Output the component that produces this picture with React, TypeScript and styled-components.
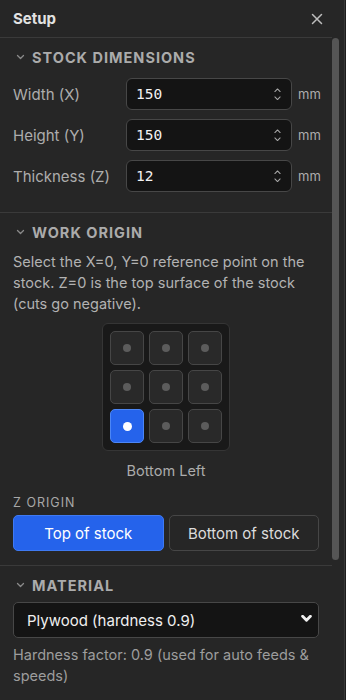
import React, { useState } from 'react';
import styled, { createGlobalStyle } from 'styled-components';

const GlobalStyle = createGlobalStyle`
  html, body {
    margin: 0;
    padding: 0;
    background: #1d1d1d;
  }
  body {
    font-family: Inter, "Liberation Sans", Arial, sans-serif;
    -webkit-font-smoothing: antialiased;
  }
  * { box-sizing: border-box; }
`;

const Shell = styled.div`
  display: flex;
  width: 346px;
  height: 700px;
  background: #1d1d1d;
`;

const Panel = styled.div`
  width: 345px;
  height: 700px;
  display: flex;
  flex-direction: column;
  background: #262626;
  border-right: 1px solid #383838;
`;

const Header = styled.div`
  height: 38px;
  flex: none;
  margin-right: 12px;
  padding: 0 5px 0 13px;
  display: flex;
  align-items: center;
  justify-content: space-between;
  border-bottom: 1px solid #3a3a3a;
`;

const Title = styled.h1`
  margin: 0;
  font-size: 15px;
  font-weight: 700;
  color: #e2e2e2;
`;

const CloseButton = styled.button`
  width: 20px;
  height: 20px;
  padding: 0;
  border: 0;
  background: transparent;
  display: flex;
  align-items: center;
  justify-content: center;
  color: #bdbdbd;
  cursor: pointer;
`;

const Body = styled.div`
  flex: 1;
  min-height: 0;
  display: flex;
`;

const Content = styled.div`
  flex: 1;
  min-width: 0;
  overflow: hidden;
`;

const ScrollRail = styled.div`
  width: 12px;
  flex: none;
  padding-right: 5px;
`;

const ScrollThumb = styled.div`
  height: 522px;
  background: #555555;
  border-radius: 4px;
`;

const Section = styled.section<{ $pb: number; $last?: boolean }>`
  padding: 9px 13px ${(p) => p.$pb}px;
  border-bottom: ${(p) => (p.$last ? '0' : '1px solid #3a3a3a')};
`;

const SectionTitle = styled.div<{ $mb: number }>`
  height: 20px;
  display: flex;
  align-items: center;
  gap: 7px;
  margin-bottom: ${(p) => p.$mb}px;
  padding-left: 3px;
  font-size: 14.5px;
  font-weight: 700;
  letter-spacing: 1px;
  color: #ababab;
  text-transform: uppercase;
`;

const Rows = styled.div`
  display: flex;
  flex-direction: column;
  gap: 9px;
`;

const FieldRow = styled.div`
  display: flex;
  align-items: center;
  height: 32px;
`;

const FieldLabel = styled.label`
  flex: none;
  width: 113px;
  font-size: 15px;
  color: #adadad;
`;

const NumberBox = styled.div`
  flex: none;
  width: 166px;
  height: 32px;
  display: flex;
  align-items: center;
  background: #141414;
  border: 1px solid #474747;
  border-radius: 6px;
  padding: 0 10px 0 9px;
`;

const NumberInput = styled.input`
  flex: 1;
  min-width: 0;
  border: 0;
  outline: none;
  background: transparent;
  color: #f2f2f2;
  font-family: "DejaVu Sans Mono", "Liberation Mono", monospace;
  font-size: 14.5px;
  padding: 0;
  &::-webkit-inner-spin-button,
  &::-webkit-outer-spin-button {
    -webkit-appearance: none;
    margin: 0;
  }
`;

const Stepper = styled.div`
  display: flex;
  flex-direction: column;
  gap: 4px;
  color: #a8a8a8;
`;

const Unit = styled.span`
  margin-left: 6px;
  font-size: 13px;
  color: #adadad;
`;

const Description = styled.p`
  margin: 0 0 9px;
  font-size: 14.5px;
  line-height: 21px;
  color: #b2b2b2;
`;

const GridWrap = styled.div`
  display: flex;
  flex-direction: column;
  align-items: center;
`;

const OriginGrid = styled.div`
  display: grid;
  grid-template-columns: repeat(3, 34px);
  grid-auto-rows: 34px;
  gap: 5px;
  padding: 7px;
  background: #191919;
  border: 1px solid #353535;
  border-radius: 6px;
`;

const Cell = styled.button<{ $active: boolean }>`
  padding: 0;
  display: flex;
  align-items: center;
  justify-content: center;
  border-radius: 5px;
  border: 1px solid ${(p) => (p.$active ? '#4c86f5' : '#464646')};
  background: ${(p) => (p.$active ? '#2563eb' : '#292929')};
  cursor: pointer;
`;

const Dot = styled.span<{ $active: boolean }>`
  width: ${(p) => (p.$active ? 9 : 8)}px;
  height: ${(p) => (p.$active ? 9 : 8)}px;
  border-radius: 50%;
  background: ${(p) => (p.$active ? '#ffffff' : '#5c5c5c')};
`;

const GridCaption = styled.div`
  margin-top: 10px;
  font-size: 14.5px;
  line-height: 20px;
  color: #acacac;
`;

const SubLabel = styled.div`
  margin-top: 14px;
  margin-bottom: 4px;
  font-size: 12.5px;
  line-height: 16px;
  letter-spacing: 1px;
  color: #a8a8a8;
`;

const Toggle = styled.div`
  display: grid;
  grid-template-columns: 1fr 1fr;
  gap: 5px;
`;

const ToggleButton = styled.button<{ $active: boolean }>`
  height: 36px;
  border-radius: 5px;
  font-family: inherit;
  font-size: 15px;
  cursor: pointer;
  border: 1px solid ${(p) => (p.$active ? '#3f7af2' : '#464646')};
  background: ${(p) => (p.$active ? '#2563eb' : 'transparent')};
  color: ${(p) => (p.$active ? '#ffffff' : '#dcdcdc')};
`;

const SelectWrap = styled.div`
  position: relative;
  height: 36px;
`;

const Select = styled.select`
  width: 100%;
  height: 36px;
  appearance: none;
  -webkit-appearance: none;
  background: #141414;
  border: 1px solid #474747;
  border-radius: 5px;
  padding: 0 30px 0 13px;
  color: #f0f0f0;
  font-family: inherit;
  font-size: 15px;
  outline: none;
`;

const SelectChevron = styled.span`
  position: absolute;
  right: 7px;
  top: 13px;
  pointer-events: none;
  color: #f0f0f0;
  display: flex;
`;

const Help = styled.p`
  margin: 6px 0 0;
  font-size: 14.5px;
  line-height: 21px;
  color: #9d9d9d;
`;

const Chevron = ({ size = 8, up = false, sw = 1.4 }: { size?: number; up?: boolean; sw?: number }) => (
  <svg width={size} height={size / 2 + 1} viewBox="0 0 8 5" fill="none" stroke="currentColor" strokeWidth={sw} strokeLinecap="round" strokeLinejoin="round">
    {up ? <path d="M1 4 L4 1 L7 4" /> : <path d="M1 1 L4 4 L7 1" />}
  </svg>
);

const SectionChevron = () => (
  <svg width="9" height="6" viewBox="0 0 9 6" fill="none" stroke="#8a8a8a" strokeWidth="1.3" strokeLinecap="round" strokeLinejoin="round">
    <path d="M1.5 1.5 L4.5 4.5 L7.5 1.5" />
  </svg>
);

const fields = [
  { label: 'Width (X)', value: 150 },
  { label: 'Height (Y)', value: 150 },
  { label: 'Thickness (Z)', value: 12 },
];

const origins = [
  'Top Left', 'Top Center', 'Top Right',
  'Middle Left', 'Center', 'Middle Right',
  'Bottom Left', 'Bottom Center', 'Bottom Right',
];

const App: React.FC = () => {
  const [dims, setDims] = useState(fields.map((f) => f.value));
  const [origin, setOrigin] = useState(6);
  const [zTop, setZTop] = useState(true);
  const [material, setMaterial] = useState('plywood');

  return (
    <>
      <GlobalStyle />
      <Shell>
        <Panel>
          <Header>
            <Title>Setup</Title>
            <CloseButton aria-label="Close">
              <svg width="12" height="12" viewBox="0 0 12 12" stroke="currentColor" strokeWidth="1.5" strokeLinecap="round">
                <path d="M1.5 1.5 L10.5 10.5 M10.5 1.5 L1.5 10.5" />
              </svg>
            </CloseButton>
          </Header>
          <Body>
            <Content>
              <Section $pb={20}>
                <SectionTitle $mb={11}>
                  <SectionChevron />
                  Stock Dimensions
                </SectionTitle>
                <Rows>
                  {fields.map((f, i) => (
                    <FieldRow key={f.label}>
                      <FieldLabel>{f.label}</FieldLabel>
                      <NumberBox>
                        <NumberInput
                          type="number"
                          value={dims[i]}
                          onChange={(e) => {
                            const next = [...dims];
                            next[i] = Number(e.target.value);
                            setDims(next);
                          }}
                        />
                        <Stepper>
                          <Chevron size={7} up sw={1.2} />
                          <Chevron size={7} sw={1.2} />
                        </Stepper>
                      </NumberBox>
                      <Unit>mm</Unit>
                    </FieldRow>
                  ))}
                </Rows>
              </Section>

              <Section $pb={14}>
                <SectionTitle $mb={9}>
                  <SectionChevron />
                  Work Origin
                </SectionTitle>
                <Description>
                  Select the X=0, Y=0 reference point on the stock. Z=0 is the top surface of the stock (cuts go negative).
                </Description>
                <GridWrap>
                  <OriginGrid>
                    {origins.map((o, i) => (
                      <Cell key={o} $active={origin === i} onClick={() => setOrigin(i)} aria-label={o}>
                        <Dot $active={origin === i} />
                      </Cell>
                    ))}
                  </OriginGrid>
                  <GridCaption>{origins[origin]}</GridCaption>
                </GridWrap>
                <SubLabel>Z ORIGIN</SubLabel>
                <Toggle>
                  <ToggleButton $active={zTop} onClick={() => setZTop(true)}>Top of stock</ToggleButton>
                  <ToggleButton $active={!zTop} onClick={() => setZTop(false)}>Bottom of stock</ToggleButton>
                </Toggle>
              </Section>

              <Section $pb={20} $last>
                <SectionTitle $mb={7}>
                  <SectionChevron />
                  Material
                </SectionTitle>
                <SelectWrap>
                  <Select value={material} onChange={(e) => setMaterial(e.target.value)}>
                    <option value="plywood">Plywood (hardness 0.9)</option>
                    <option value="mdf">MDF (hardness 0.8)</option>
                    <option value="pine">Pine (hardness 0.7)</option>
                    <option value="oak">Oak (hardness 1.2)</option>
                  </Select>
                  <SelectChevron>
                    <Chevron size={11} sw={2.2} />
                  </SelectChevron>
                </SelectWrap>
                <Help>Hardness factor: 0.9 (used for auto feeds &amp; speeds)</Help>
              </Section>
            </Content>
            <ScrollRail>
              <ScrollThumb />
            </ScrollRail>
          </Body>
        </Panel>
      </Shell>
    </>
  );
};

export default App;
